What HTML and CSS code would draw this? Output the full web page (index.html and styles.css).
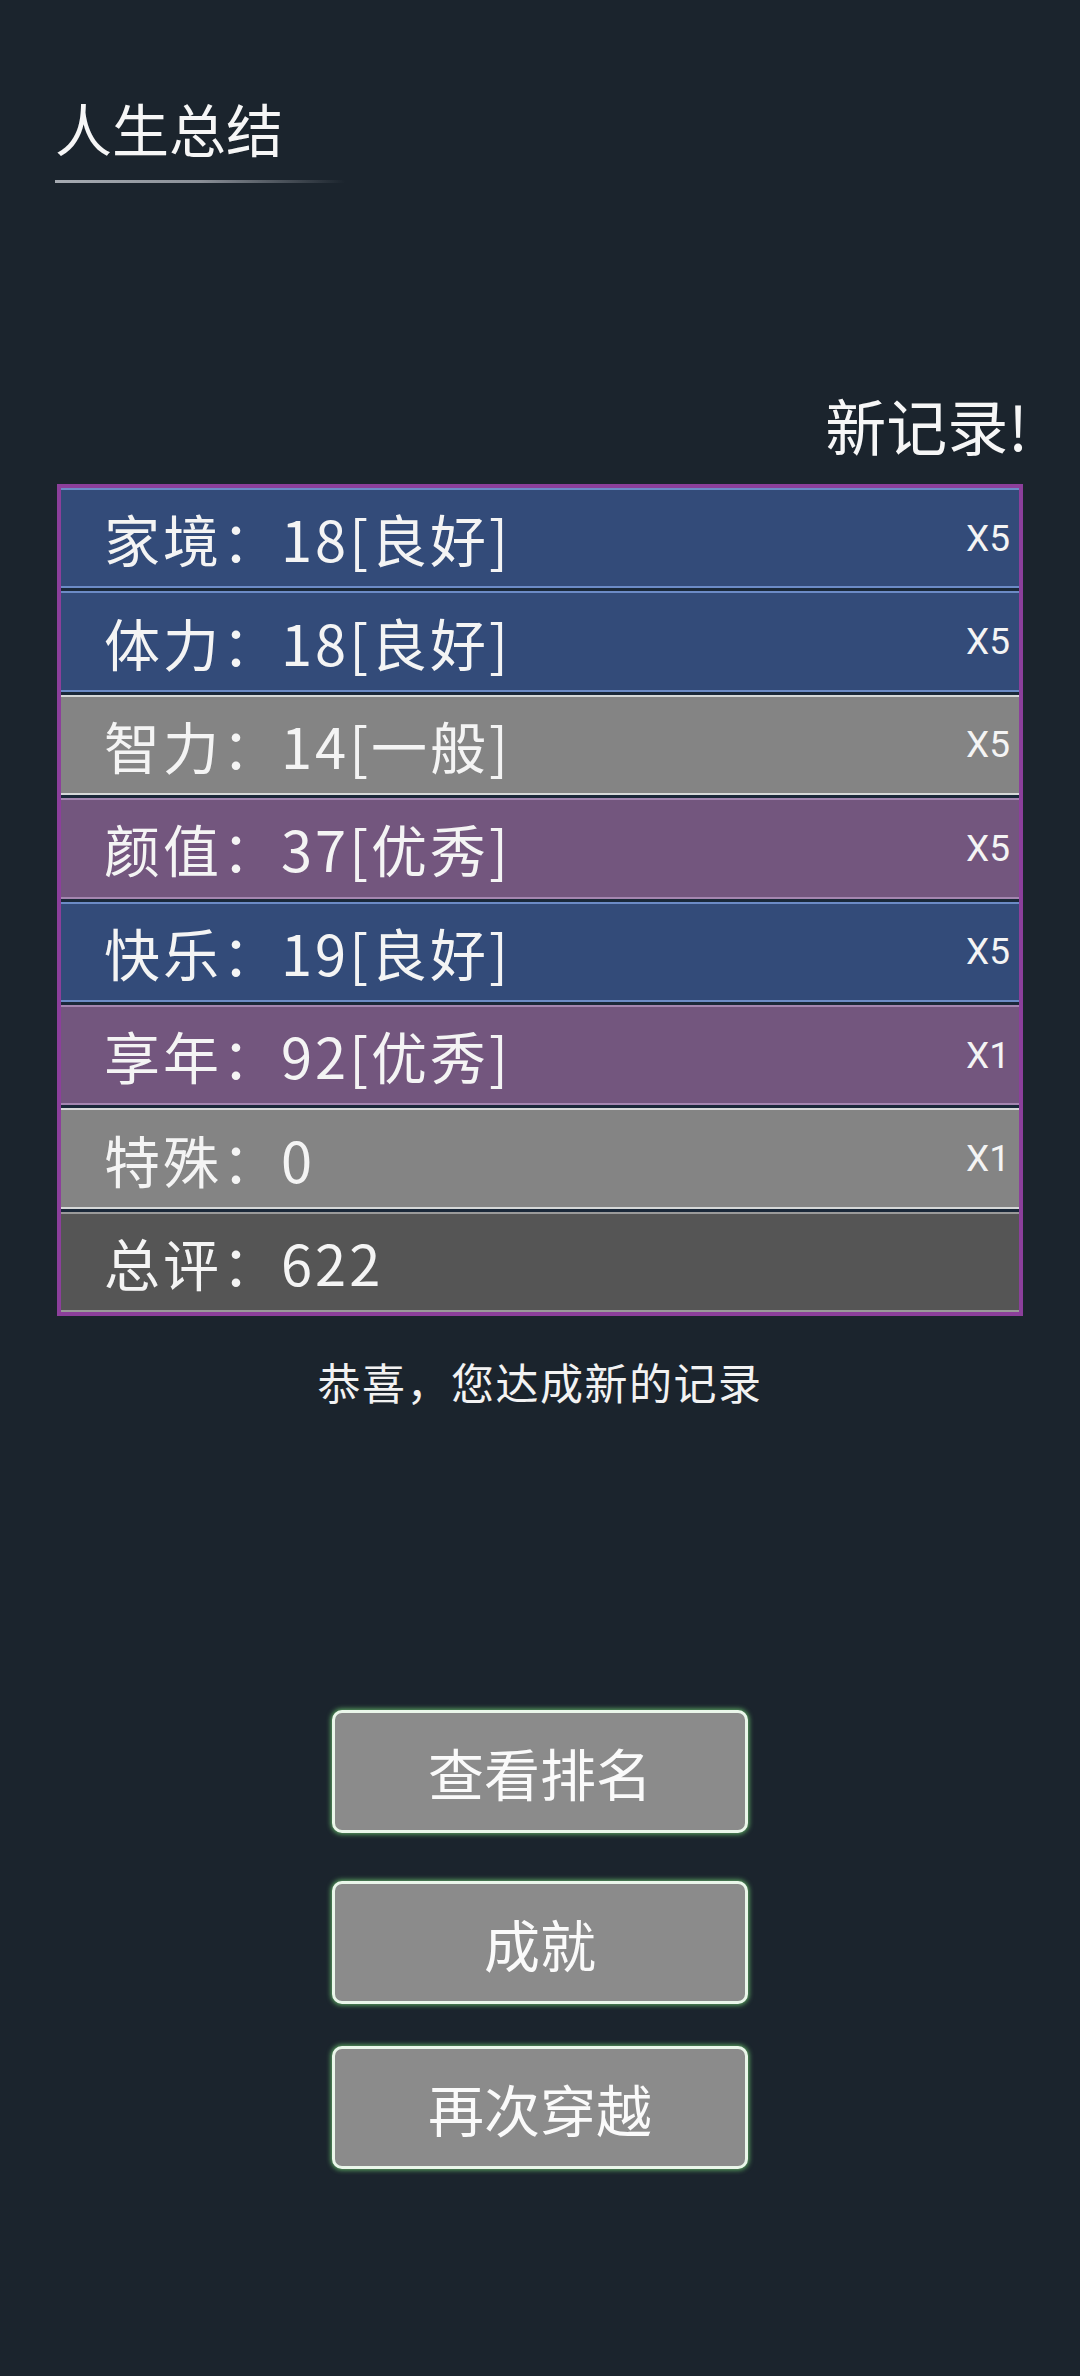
FILE: index.html
```html
<!DOCTYPE html>
<html lang="zh-CN">
<head>
    <meta charset="UTF-8">
    <meta name="viewport" content="width=device-width, initial-scale=1.0">
    <title>人生总结</title>
    <link rel="stylesheet" href="styles.css">
</head>
<body>

    <!-- Title -->
    <div class="title-bar">
        <h1>人生总结</h1>
        <div class="title-line"></div>
    </div>

    <div class="new-record">新记录!</div>

    <!-- Summary table -->
    <div class="summary">
        <div class="row blue"><span class="label">家境：18[良好]</span><span class="mult">X5</span></div>
        <div class="row blue"><span class="label">体力：18[良好]</span><span class="mult">X5</span></div>
        <div class="row grey"><span class="label">智力：14[一般]</span><span class="mult">X5</span></div>
        <div class="row purple"><span class="label">颜值：37[优秀]</span><span class="mult">X5</span></div>
        <div class="row blue"><span class="label">快乐：19[良好]</span><span class="mult">X5</span></div>
        <div class="row purple"><span class="label">享年：92[优秀]</span><span class="mult">X1</span></div>
        <div class="row grey"><span class="label">特殊：0</span><span class="mult">X1</span></div>
        <div class="row dark"><span class="label">总评：622</span></div>
    </div>

    <p class="congrats">恭喜，您达成新的记录</p>

    <!-- Buttons -->
    <div class="actions">
        <button class="btn">查看排名</button>
        <button class="btn btn-mid">成就</button>
        <button class="btn btn-last">再次穿越</button>
    </div>

</body>
</html>
```

FILE: styles.css
```css
* {
    margin: 0;
    padding: 0;
    box-sizing: border-box;
    font-family: "Noto Sans CJK SC", "Noto Sans", sans-serif;
}
body {
    width: 1080px;
    height: 2376px;
    background-color: #1b242d;
    color: #f4f4f4;
    overflow: hidden;
}
.title-bar {
    padding: 99px 0 0 55px;
}
.title-bar h1 {
    font-size: 57px;
    font-weight: normal;
    line-height: 1;
    color: #f6f6f6;
}
.title-line {
    width: 290px;
    height: 3px;
    margin-top: 24px;
    background: linear-gradient(to right, #a6abb2 0%, #8b9098 50%, rgba(139, 144, 152, 0) 100%);
}
.new-record {
    text-align: right;
    padding-right: 52px;
    margin-top: 211px;
    font-size: 61px;
    line-height: 1;
    color: #f6f6f6;
}
.summary {
    width: 966px;
    margin: 29px 0 0 57px;
    border: 4px solid #8c3f9b;
    background-color: #1a2839;
    display: flex;
    flex-direction: column;
    gap: 3px;
}
.row {
    height: 100.4px;
    display: flex;
    justify-content: space-between;
    align-items: center;
    padding: 0 9px 0 43px;
    border-top: 2px solid;
    border-bottom: 2px solid;
}
.row .label {
    font-size: 56px;
    line-height: 1;
    letter-spacing: 3px;
}
.row .mult {
    font-family: Roboto, "Liberation Sans", sans-serif;
    font-size: 37px;
    line-height: 1;
}
.blue {
    background-color: #334b79;
    border-color: #6c8bc6;
}
.grey {
    background-color: #848484;
    border-color: #d6d8d8;
}
.purple {
    background-color: #73567e;
    border-color: #a486b0;
}
.dark {
    background-color: #555555;
    border-color: #9a9a9a;
}
.congrats {
    margin-top: 44px;
    text-align: center;
    font-size: 43px;
    line-height: 1;
    letter-spacing: 1.5px;
    color: #f2f2f2;
}
.actions {
    display: flex;
    flex-direction: column;
    align-items: center;
    margin-top: 307px;
}
.btn {
    width: 416px;
    height: 123px;
    background-color: #8b8b8b;
    border: 3px solid #eaf6ea;
    border-radius: 10px;
    box-shadow: 0 0 5px 1px rgba(120, 220, 120, 0.75);
    color: #fafafa;
    font-size: 56px;
    line-height: 1;
}
.btn-mid {
    margin-top: 48px;
}
.btn-last {
    margin-top: 42px;
}
```
